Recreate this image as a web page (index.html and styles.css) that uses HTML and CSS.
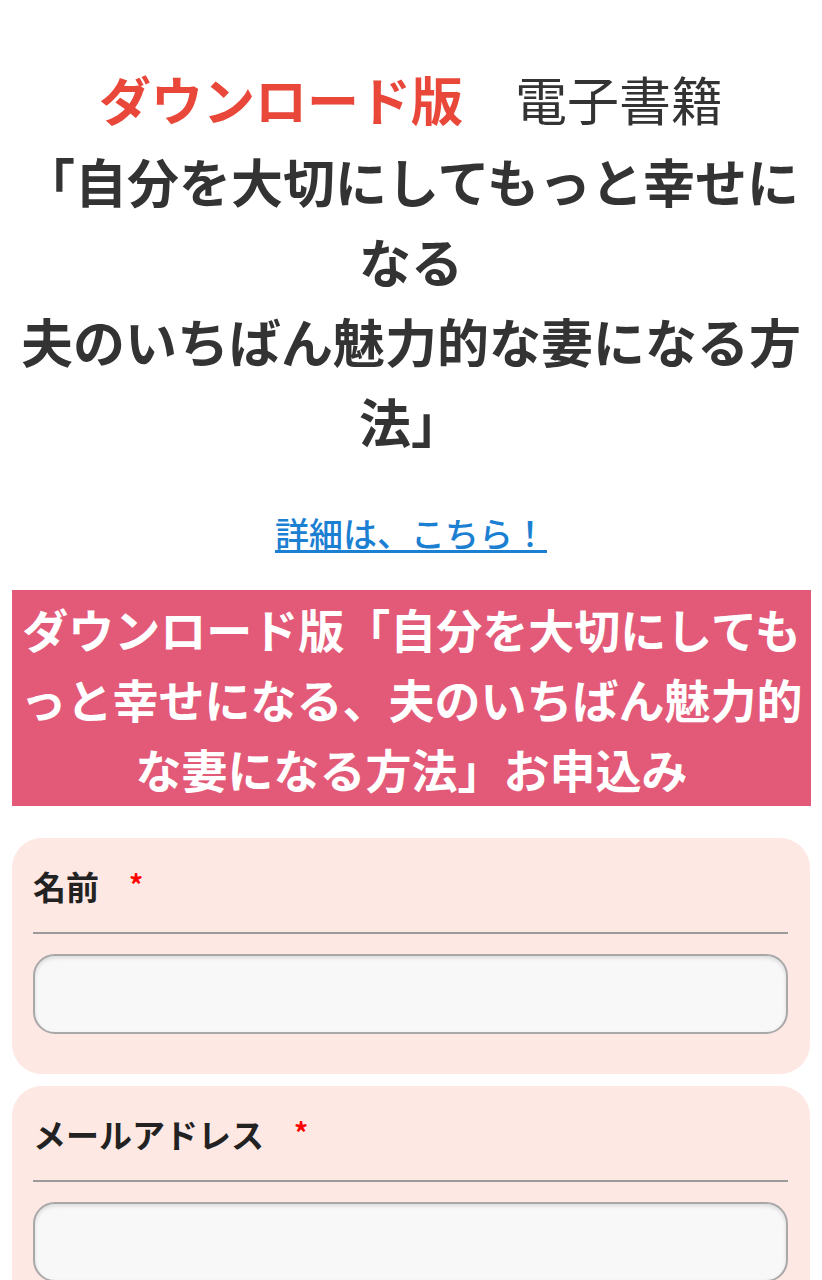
FILE: index.html
```html
<!DOCTYPE html>
<html lang="ja">
<head>
  <meta charset="utf-8">
  <title>ダウンロード版 電子書籍 お申込み</title>
  <link rel="stylesheet" href="styles.css">
</head>
<body>

  <!-- Title -->
  <h1 class="title">
    <span class="title-top"><span class="title-red">ダウンロード版</span>　<span class="title-light">電子書籍</span></span>
    <span class="title-main">「自分を大切にしてもっと幸せになる<br>夫のいちばん魅力的な妻になる方法」</span>
  </h1>

  <p class="more"><a href="#">詳細は、こちら！</a></p>

  <!-- Form -->
  <h2 class="banner">ダウンロード版「自分を大切にしてもっと幸せになる、夫のいちばん魅力的な妻になる方法」お申込み</h2>

  <form class="apply">
    <div class="field">
      <label class="field-label" for="name">名前<span class="req">*</span></label>
      <input class="field-input" type="text" id="name">
    </div>
    <div class="field">
      <label class="field-label" for="email">メールアドレス<span class="req">*</span></label>
      <input class="field-input" type="email" id="email">
    </div>
  </form>

</body>
</html>
```

FILE: styles.css
```css
* {
  box-sizing: border-box;
}

body {
  margin: 8px;
  font-family: "Noto Sans CJK JP", "Noto Sans", sans-serif;
  color: #333;
  background: white;
}

.title {
  margin: 51px 0 0;
  text-align: center;
  font-size: 52px;
  font-weight: bold;
}

.title-top {
  display: block;
  line-height: 80px;
  margin-bottom: 2px;
}

.title-red {
  color: #e8473a;
}

.title-light {
  font-weight: normal;
}

.title-main {
  display: block;
  line-height: 80px;
}

.more {
  margin: 47px 0 0;
  text-align: center;
  font-size: 34px;
  line-height: 50px;
}

.more a {
  color: #1b80d2;
  font-weight: 500;
  text-underline-offset: 3px;
}

.banner {
  margin: 32px 3px 0 4px;
  padding: 3px 4px;
  background: #e35a78;
  color: white;
  text-align: center;
  font-size: 46px;
  line-height: 70px;
  font-weight: bold;
}

.apply {
  display: flex;
  flex-direction: column;
  gap: 12px;
  margin: 32px 4px 0 4px;
}

.field {
  display: flex;
  flex-direction: column;
  padding: 26px 22px 40px 21px;
  background: #fde8e4;
  border-radius: 30px;
}

.field-label {
  display: block;
  padding-bottom: 24px;
  border-bottom: 2px solid #9a9a9a;
  font-size: 33px;
  line-height: 44px;
  font-weight: bold;
  color: #222;
}

.req {
  margin-left: 30px;
  color: red;
  font-size: 28px;
  font-weight: bold;
  vertical-align: top;
  line-height: 40px;
}

.field-input {
  margin-top: 20px;
  height: 80px;
  border: 2px solid #a8a8a8;
  border-radius: 22px;
  background: #f8f8f8;
  box-shadow: inset 0 2px 4px rgba(0, 0, 0, 0.12);
  font-size: 28px;
  padding: 0 16px;
}
```
